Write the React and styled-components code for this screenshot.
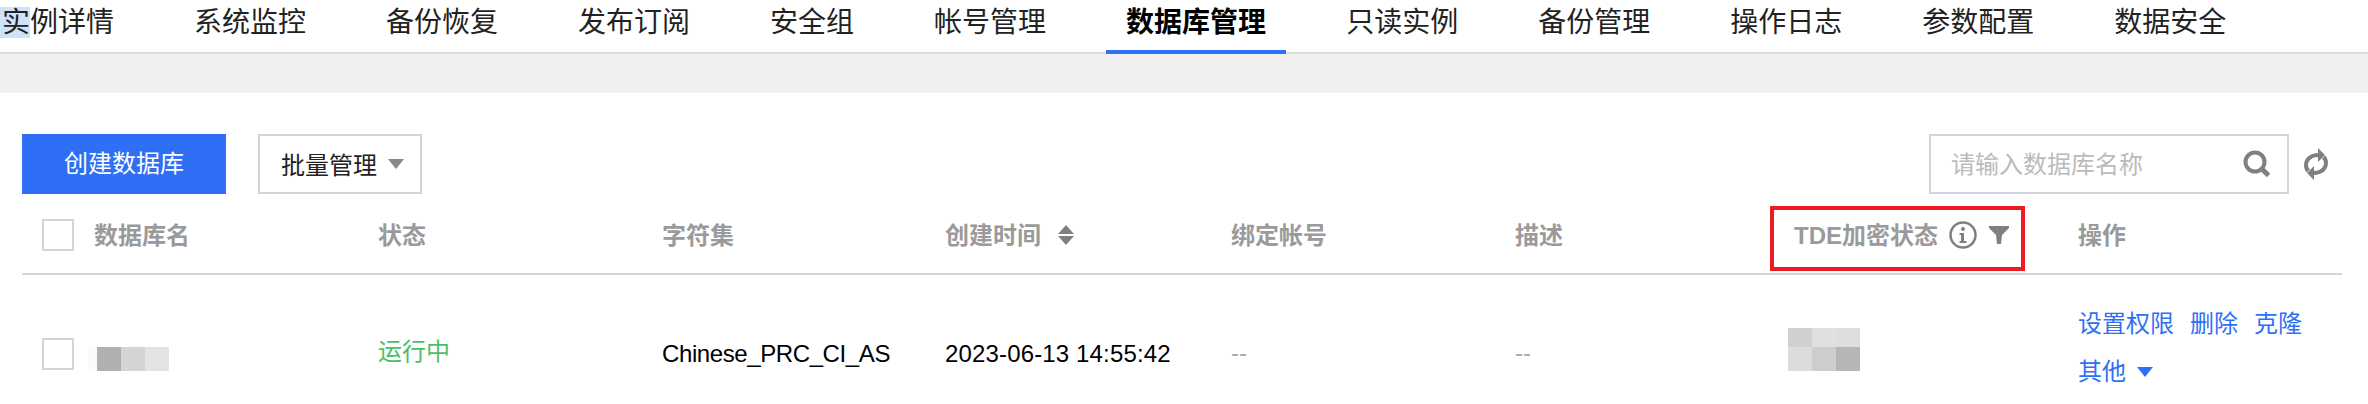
import React from 'react'
import styled, { createGlobalStyle } from 'styled-components'

const GlobalStyle = createGlobalStyle`
  html, body {
    margin: 0;
    padding: 0;
    height: 404px;
    overflow: hidden;
    background: #fff;
    font-family: "Liberation Sans", "Noto Sans CJK SC", sans-serif;
  }
`

const Page = styled.div`
  width: 2368px;
  height: 404px;
  position: relative;
  overflow: hidden;
`

const TabBar = styled.div`
  display: flex;
  gap: 40px;
  height: 52px;
  margin-left: -18px;
  border-bottom: 2px solid #ddd;
`

const Tab = styled.div`
  height: 54px;
  box-sizing: border-box;
  padding: 6px 20px 0;
  font-size: 28px;
  line-height: 34px;
  white-space: nowrap;
  color: ${(p) => (p.$active ? '#000' : '#222')};
  font-weight: ${(p) => (p.$active ? 700 : 400)};
  border-bottom: 4px solid ${(p) => (p.$active ? '#2f6ff6' : 'transparent')};
`

const Selected = styled.span`
  background: #cfe2fb;
  margin-left: -2px;
  padding-left: 2px;
`

const Band = styled.div`
  height: 39px;
  background: #f0f0f0;
`

const Content = styled.div`
  padding: 41px 26px 0 22px;
`

const Toolbar = styled.div`
  display: flex;
  justify-content: space-between;
  align-items: flex-start;
  padding-right: 13px;
`

const ToolGroup = styled.div`
  display: flex;
  align-items: center;
  gap: ${(p) => p.$gap}px;
`

const PrimaryButton = styled.div`
  width: 204px;
  height: 60px;
  background: #2f6ff6;
  color: #fff;
  font-size: 24px;
  line-height: 60px;
  text-align: center;
`

const SelectButton = styled.div`
  width: 164px;
  height: 60px;
  box-sizing: border-box;
  border: 2px solid #d1d5e0;
  display: flex;
  align-items: center;
  padding-left: 21px;
  gap: 11px;
  font-size: 24px;
  color: #222;
`

const Caret = styled.i`
  width: 0;
  height: 0;
  border-left: 8px solid transparent;
  border-right: 8px solid transparent;
  border-top: 10px solid ${(p) => p.$color};
`

const SearchBox = styled.div`
  width: 360px;
  height: 60px;
  box-sizing: border-box;
  border: 2px solid #d1d5e0;
  display: flex;
  align-items: center;
  justify-content: space-between;
  padding: 0 16px 0 20px;
  font-size: 24px;
  color: #bbb;
`

const Lifted = styled.span`
  margin-bottom: ${(p) => p.$by}px;
`

const HeadRow = styled.div`
  display: grid;
  grid-template-columns: 356px 284px 283px 286px 284px 279px 284px 1fr;
  height: 68px;
  margin-top: 11px;
  border-bottom: 2px solid #d1d5e0;
`

const HeadCell = styled.div`
  display: flex;
  align-items: center;
  height: 60px;
  font-size: 24px;
  font-weight: 700;
  color: #9a9a9a;
  white-space: nowrap;
  ${(p) => p.$first && 'padding-left: 20px; gap: 20px;'}
`

const BodyRow = styled.div`
  display: grid;
  grid-template-columns: 356px 284px 283px 286px 284px 279px 284px 1fr;
`

const Cell = styled.div`
  height: 110px;
  padding-top: ${(p) => p.$top || 60}px;
  box-sizing: border-box;
  font-size: 24px;
  line-height: 34px;
  letter-spacing: ${(p) => p.$spacing || 0}px;
  color: ${(p) => p.$color || '#000'};
  white-space: nowrap;
`

const NameCell = styled.div`
  display: flex;
  align-items: flex-start;
  padding: 63px 0 0 20px;
  gap: 14px;
`

const Checkbox = styled.div`
  width: 32px;
  height: 32px;
  box-sizing: border-box;
  border: 2px solid #d1d5e0;
  flex: none;
`

const Mosaic = styled.div`
  display: grid;
  grid-template-columns: ${(p) => p.$columns};
  grid-template-rows: ${(p) => p.$rows};
  margin: ${(p) => p.$top}px 0 0 ${(p) => p.$left || 0}px;
  align-self: start;
  justify-self: start;
`

const Tile = styled.div`
  background: ${(p) => p.$color};
`

const Actions = styled.div`
  padding-top: 25px;
  font-size: 24px;
  line-height: 48px;
  color: #2f6ff6;
  white-space: nowrap;
`

const ActionLine = styled.div`
  display: flex;
  align-items: center;
  gap: ${(p) => p.$gap}px;
`

const Annotation = styled.div`
  position: absolute;
  left: 1770px;
  top: 206px;
  width: 255px;
  height: 65px;
  box-sizing: border-box;
  border: 4px solid #ed1c24;
`

const Sort = styled.span`
  display: inline-flex;
  margin-left: 17px;
`

const Info = styled.span`
  display: inline-flex;
  margin-left: 11px;
`

const Filter = styled.span`
  display: inline-flex;
  margin-left: 12px;
`

const tabs = ['系统监控', '备份恢复', '发布订阅', '安全组', '帐号管理', '数据库管理', '只读实例', '备份管理', '操作日志', '参数配置', '数据安全']

const SearchIcon = () => (
  <svg width="28" height="28" viewBox="0 0 28 28" fill="none" stroke="#808080">
    <circle cx="12" cy="12" r="9.5" strokeWidth="4" />
    <path d="M18.5 18.5L25.5 25.5" strokeWidth="5" />
  </svg>
)

const RefreshIcon = () => (
  <svg width="26" height="32" viewBox="0 0 26 32" fill="#808080">
    <path d="M15 0v5C7 5 1 10 1 17c0 3 1 5.500 2.500 7.500L7 21.500C5.800 20.200 5 18.600 5 17c0-4.500 4.500-8 10-8v5l7-7z" />
    <path d="M11 32v-5c8 0 14-5 14-12 0-3-1-5.500-2.500-7.500L19 10.500c1.200 1.300 2 2.900 2 4.500 0 4.500-4.500 8-10 8v-5l-7 7z" />
  </svg>
)

const InfoIcon = () => (
  <svg width="28" height="28" viewBox="0 0 28 28" fill="none">
    <circle cx="14" cy="14" r="12.500" stroke="#808080" strokeWidth="2.500" />
    <circle cx="14" cy="8" r="2" fill="#808080" />
    <path d="M10.500 12h4.500v8h2.500v2h-7v-2H12v-6h-1.500z" fill="#808080" />
  </svg>
)

const FilterIcon = () => (
  <svg width="20" height="18" viewBox="0 0 20 18" fill="#808080">
    <path d="M0 0h20v2l-7 7-1 9H8L7 9 0 2z" />
  </svg>
)

const SortIcon = () => (
  <svg width="16" height="20" viewBox="0 0 16 20" fill="#808080">
    <path d="M8 0l8 9H0z" />
    <path d="M8 20l8-9H0z" />
  </svg>
)

const App = () => {
  return (
    <Page>
      <GlobalStyle />
      <TabBar>
        <Tab>
          <Selected>实</Selected>例详情
        </Tab>
        {tabs.map((name) => (
          <Tab key={name} $active={name === '数据库管理'}>
            {name}
          </Tab>
        ))}
      </TabBar>
      <Band />
      <Content>
        <Toolbar>
          <ToolGroup $gap={32}>
            <PrimaryButton>创建数据库</PrimaryButton>
            <SelectButton>
              <Lifted $by={2}>批量管理</Lifted>
              <Caret $color="#888" />
            </SelectButton>
          </ToolGroup>
          <ToolGroup $gap={14}>
            <SearchBox>
              <Lifted $by={4}>请输入数据库名称</Lifted>
              <SearchIcon />
            </SearchBox>
            <RefreshIcon />
          </ToolGroup>
        </Toolbar>
        <HeadRow>
          <HeadCell $first>
            <Checkbox />
            <Lifted $by={4}>数据库名</Lifted>
          </HeadCell>
          <HeadCell>
            <Lifted $by={4}>状态</Lifted>
          </HeadCell>
          <HeadCell>
            <Lifted $by={4}>字符集</Lifted>
          </HeadCell>
          <HeadCell>
            <Lifted $by={4}>创建时间</Lifted>
            <Sort>
              <SortIcon />
            </Sort>
          </HeadCell>
          <HeadCell>
            <Lifted $by={4}>绑定帐号</Lifted>
          </HeadCell>
          <HeadCell>
            <Lifted $by={4}>描述</Lifted>
          </HeadCell>
          <HeadCell>
            <Lifted $by={4}>TDE加密状态</Lifted>
            <Info>
              <InfoIcon />
            </Info>
            <Filter>
              <FilterIcon />
            </Filter>
          </HeadCell>
          <HeadCell>
            <Lifted $by={4}>操作</Lifted>
          </HeadCell>
        </HeadRow>
        <BodyRow>
          <NameCell>
            <Checkbox />
            <Mosaic $columns="9px 24px 24px 24px" $rows="24px" $top={9}>
              <Tile $color="#fafafa" />
              <Tile $color="#b0b0b0" />
              <Tile $color="#d4d4d4" />
              <Tile $color="#e4e4e4" />
            </Mosaic>
          </NameCell>
          <Cell $color="#4cbf64">运行中</Cell>
          <Cell $spacing={-0.4} $top={62}>Chinese_PRC_CI_AS</Cell>
          <Cell $spacing={0.15} $top={62}>2023-06-13 14:55:42</Cell>
          <Cell $color="#aaa" $top={61}>--</Cell>
          <Cell $color="#aaa" $top={61}>--</Cell>
          <Mosaic $columns="24px 24px 24px" $rows="19px 24px" $top={53} $left={-6}>
            <Tile $color="#d0d0d0" />
            <Tile $color="#e0e0e0" />
            <Tile $color="#dedede" />
            <Tile $color="#dcdcdc" />
            <Tile $color="#cdcdcd" />
            <Tile $color="#b6b6b6" />
          </Mosaic>
          <Actions>
            <ActionLine $gap={16}>
              <span>设置权限</span>
              <span>删除</span>
              <span>克隆</span>
            </ActionLine>
            <ActionLine $gap={11}>
              <span>其他</span>
              <Caret $color="#2f6ff6" />
            </ActionLine>
          </Actions>
        </BodyRow>
      </Content>
      <Annotation />
    </Page>
  )
}

export default App
